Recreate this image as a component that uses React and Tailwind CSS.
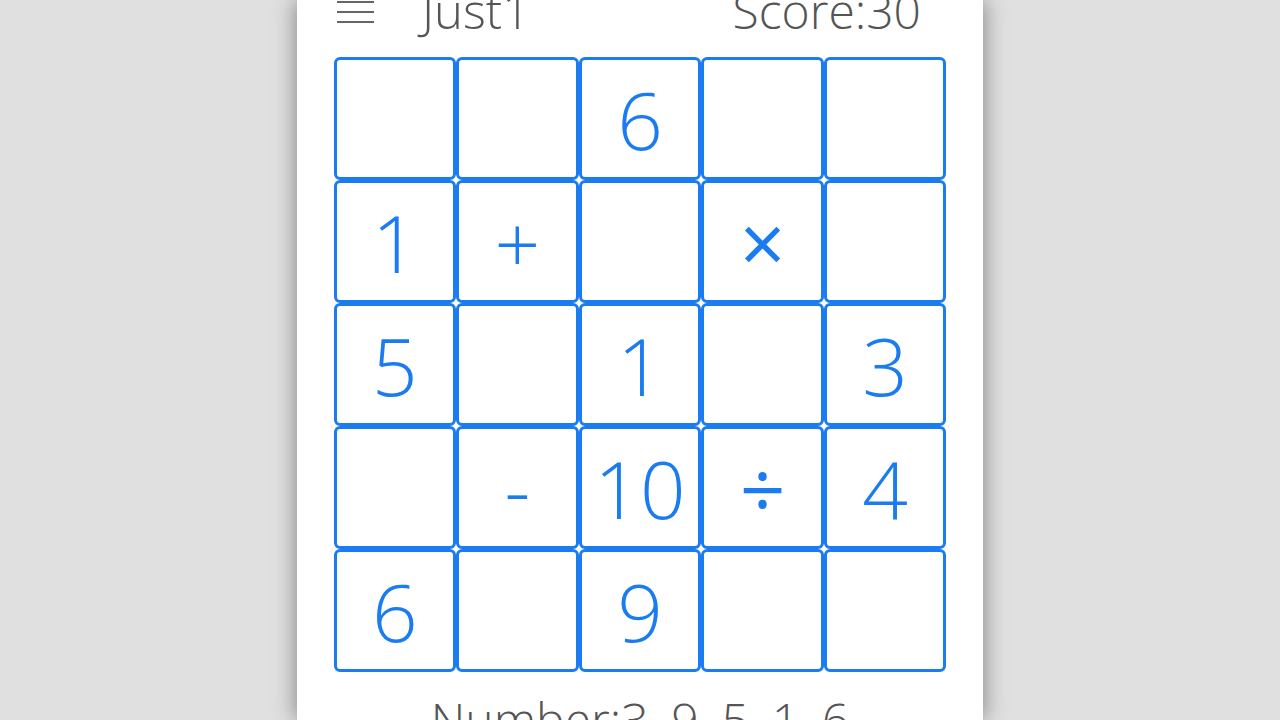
const cells = [
  ["", "", "6", "", ""],
  ["1", "+", "", "×", ""],
  ["5", "", "1", "", "3"],
  ["", "-", "10", "÷", "4"],
  ["6", "", "9", "", ""],
];

const font = { fontFamily: '"Open Sans", "Liberation Sans", sans-serif' };

function Cell({ value }) {
  const bold = value === "×" || value === "÷";
  return (
    <div
      className={`flex items-center justify-center h-[123px] w-[122.6px] border-[3px] border-[#1a7cf0] rounded-[6px] text-[80px] leading-none text-[#1a7cf0] ${
        bold ? "font-medium" : "font-light"
      }`}
    >
      {value}
    </div>
  );
}

export default function App() {
  return (
    <div className="w-full h-[720px] overflow-hidden bg-[#e0e0e0]" style={font}>
      <div className="mx-auto w-[686px] h-[720px] bg-white shadow-[0_0_22px_rgba(0,0,0,0.45)] flex flex-col">
        {/* header */}
        <div className="shrink-0 h-[57px] flex items-start px-[40px] text-[#555] font-light">
          <div className="flex flex-col gap-[8px] w-[37px] mt-[1px]">
            <span className="h-[2px] bg-[#666]" />
            <span className="h-[2px] bg-[#666]" />
            <span className="h-[2px] bg-[#666]" />
          </div>
          <div className="ml-[48px] text-[49px] leading-none -mt-[14px]">Just1</div>
          <div className="ml-auto mr-[22px] text-[48px] leading-none -mt-[13px]">Score:30</div>
        </div>
        {/* board */}
        <div className="shrink-0 mx-auto grid grid-cols-5">
          {cells.flat().map((v, i) => (
            <Cell key={i} value={v} />
          ))}
        </div>
        <div className="shrink-0 mt-[24px] text-center text-[48px] leading-none text-[#555] font-light">
          Number:3, 9, 5, 1, 6
        </div>
      </div>
    </div>
  );
}
